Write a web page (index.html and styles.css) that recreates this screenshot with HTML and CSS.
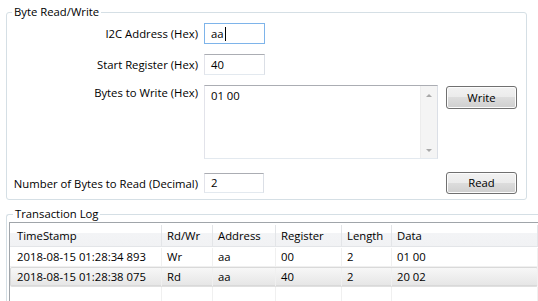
FILE: index.html
```html
<!DOCTYPE html>
<html>
<head>
<meta charset="utf-8">
<link rel="stylesheet" href="styles.css">
</head>
<body>
<div class="app">
  <fieldset class="group rw">
    <legend class="title">Byte Read/Write</legend>
    <div class="form">
      <div class="lbl">I2C Address (Hex)</div>
      <div class="field short focused">aa<span class="caret"></span></div>
      <div></div>

      <div class="lbl">Start Register (Hex)</div>
      <div class="field short">40</div>
      <div></div>

      <div class="lbl top">Bytes to Write (Hex)</div>
      <div class="field area">
        <div class="area-text">01 00</div>
        <div class="vscroll">
          <span class="arrow up"></span>
          <span class="arrow down"></span>
        </div>
      </div>
      <div class="btn write">Write</div>

      <div class="lbl last">Number of Bytes to Read (Decimal)</div>
      <div class="field short num last">2</div>
      <div class="btn read last">Read</div>
    </div>
  </fieldset>

  <fieldset class="group log">
    <legend class="title">Transaction Log</legend>
    <div class="table">
      <div class="row head">
        <div class="cell first">TimeStamp</div>
        <div class="cell">Rd/Wr</div>
        <div class="cell">Address</div>
        <div class="cell">Register</div>
        <div class="cell">Length</div>
        <div class="cell">Data</div>
      </div>
      <div class="row">
        <div class="cell first">2018-08-15 01:28:34 893</div>
        <div class="cell">Wr</div>
        <div class="cell">aa</div>
        <div class="cell">00</div>
        <div class="cell">2</div>
        <div class="cell">01 00</div>
      </div>
      <div class="row sel">
        <div class="cell first">2018-08-15 01:28:38 075</div>
        <div class="cell">Rd</div>
        <div class="cell">aa</div>
        <div class="cell">40</div>
        <div class="cell">2</div>
        <div class="cell">20 02</div>
      </div>
      <div class="row empty">
        <div class="cell first"></div>
        <div class="cell"></div>
        <div class="cell"></div>
        <div class="cell"></div>
        <div class="cell"></div>
        <div class="cell"></div>
      </div>
    </div>
  </fieldset>
</div>
</body>
</html>
```

FILE: styles.css
```css
html, body {
  margin: 0;
  padding: 0;
  background: #ffffff;
  overflow: hidden;
}
body {
  width: 538px;
  height: 301px;
  font-family: "Open Sans", "Noto Sans", sans-serif;
  font-size: 11.3px;
  color: #000;
}
.app {
  display: flex;
  flex-direction: column;
  height: 301px;
}
.group {
  margin: 0;
  padding: 0;
  border: 1px solid #d5dfe5;
  border-radius: 3px;
  min-width: 0;
}
.title {
  margin-left: 5px;
  padding: 0 2px;
  line-height: 16px;
  height: 16px;
}
.rw {
  margin: 4px 0 0 6px;
  width: 521px;
  box-sizing: border-box;
  padding: 3px 0 5px 0;
}
.log {
  margin: 6px 0 0 6px;
  flex: 1;
  min-height: 0;
  box-sizing: border-box;
  padding: 0 0 0 1px;
  border-right: none;
  border-bottom: none;
  border-radius: 3px 0 0 0;
  overflow: hidden;
}
.form {
  display: grid;
  grid-template-columns: 197px 242px 71px;
  row-gap: 10px;
  align-items: center;
}
.lbl {
  text-align: right;
  padding-right: 6px;
  white-space: nowrap;
}
.lbl.top {
  align-self: start;
}
.last {
  margin-top: 3px;
}
.field {
  box-sizing: border-box;
  border: 1px solid;
  border-color: #abadb3 #dbdfe6 #e3e9ef #e2e3ea;
  background: #fff;
  padding: 0 6px;
  line-height: 19px;
  height: 21px;
}
.short {
  width: 61px;
}
.num {
  width: 60px;
  height: 20px;
  line-height: 18px;
}
.focused {
  border-color: #7eb4ea;
  display: flex;
  align-items: center;
}
.caret {
  display: inline-block;
  width: 1px;
  height: 14px;
  background: #000;
  margin-left: 1px;
}
.area {
  width: 234px;
  height: 74px;
  padding: 0;
  display: flex;
}
.area-text {
  flex: 1;
  padding: 2px 6px;
  line-height: 16px;
}
.vscroll {
  width: 17px;
  background: #f4f4f4;
  border-left: 1px solid #ececec;
  display: flex;
  flex-direction: column;
  justify-content: space-between;
  align-items: center;
  padding: 8px 0 6px;
  box-sizing: border-box;
}
.arrow {
  width: 0;
  height: 0;
  border-left: 3px solid transparent;
  border-right: 3px solid transparent;
}
.arrow.up {
  border-bottom: 3px solid #a8a8a8;
}
.arrow.down {
  border-top: 3px solid #a8a8a8;
}
.btn {
  box-sizing: border-box;
  width: 71px;
  height: 23px;
  border: 1px solid #707070;
  border-radius: 3px;
  background: linear-gradient(#f2f2f2 0%, #ebebeb 50%, #dddddd 50%, #cfcfcf 100%);
  box-shadow: inset 0 0 0 1px #fcfcfc;
  text-align: center;
  line-height: 21px;
}
.btn.write {
  align-self: start;
  margin-top: 1px;
}
.btn.read {
  height: 22px;
  line-height: 20px;
}
.table {
  border-top: 1px solid #a0a5aa;
  border-left: 1px solid #a0a5aa;
  margin-left: 1px;
  height: 100%;
  box-sizing: border-box;
}
.row {
  display: grid;
  grid-template-columns: 152px 51px 63px 66px 50px 1fr;
  height: 20px;
  box-sizing: border-box;
  border-bottom: 1px solid #f0f0f0;
  line-height: 18px;
  padding-top: 1px;
}
.cell {
  border-right: 1px solid #f0f0f0;
  padding-left: 5px;
  white-space: nowrap;
  overflow: hidden;
}
.cell.first {
  padding-left: 7px;
}
.head {
  height: 24px;
  line-height: 21px;
  padding-top: 2px;
  background: linear-gradient(#ffffff 0%, #ffffff 45%, #f3f4f6 45%, #f1f2f4 100%);
  border-bottom: 1px solid #e3e5e8;
}
.head .cell {
  border-right-color: #e3e5e8;
}
.sel {
  background: linear-gradient(#f8f8f8, #e5e5e5);
  box-shadow: inset 0 0 0 1px #d9d9d9;
  border-radius: 2px;
  border-bottom-color: #e0e0e0;
}
.empty {
  height: 40px;
  border-bottom: none;
  padding-top: 0;
}
```
